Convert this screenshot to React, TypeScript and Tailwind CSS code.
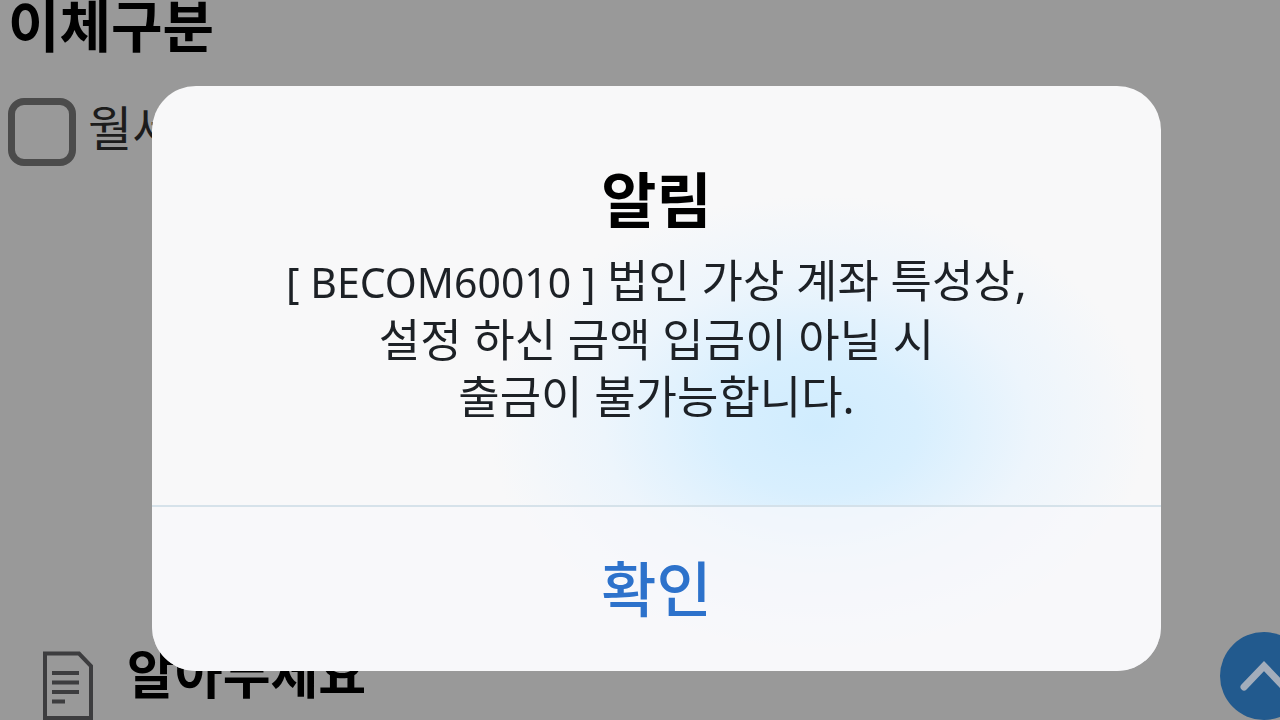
import React from "react";

const DocumentIcon: React.FC = () => {
  return (
    <svg width="52" height="70" viewBox="0 0 52 70" fill="none" stroke="#3d3d3f" aria-hidden="true">
      <path d="M4 3.5H38L50 16V68H4Z" strokeWidth="4" />
      <path d="M11 23H38M11 32.5H38M11 42H38M11 51.5H24" strokeWidth="4" />
    </svg>
  );
};

const AlertDialog: React.FC = () => {
  return (
    <div className="fixed inset-0 flex items-center pt-9 pr-[119px] pl-[152px]">
      <div
        role="alertdialog"
        aria-modal="true"
        aria-labelledby="alert-title"
        aria-describedby="alert-message"
        className="flex w-full flex-col overflow-hidden rounded-[44px] bg-[#f8f8f9] bg-[radial-gradient(ellipse_330px_230px_at_66%_58%,#d0ecfe_0%,#d8effe_30%,#edf5fc_65%,#f8f8f900_100%)] text-center"
      >
        <div className="px-8 pt-[72px] pb-20">
          <h2 id="alert-title" className="text-[60px] leading-[84px] font-bold text-black">
            알림
          </h2>
          <p id="alert-message" className="pt-2.5 text-[45px] leading-[57px] text-[#1d2126]">
            <span className="text-[41px]">[ BECOM60010 ]</span> 법인 가상 계좌 특성상,
            <br />
            설정 하신 금액 입금이 아닐 시
            <br />
            출금이 불가능합니다.
          </p>
        </div>
        <button
          type="button"
          className="border-t-2 border-[#c8d8e2]/70 bg-[#f8f8fb]/70 py-10 text-[60px] leading-[84px] font-medium text-[#2d72cb]"
        >
          확인
        </button>
      </div>
    </div>
  );
};

const App: React.FC = () => {
  return (
    <div className="flex h-screen flex-col justify-between overflow-hidden bg-[#999999] font-['Noto_Sans','Noto_Sans_CJK_KR',sans-serif]">
      {/* Transfer type */}
      <section className="px-2">
        <h1 className="text-[56px] leading-[50px] font-bold text-black">이체구분</h1>
        <label className="mt-12 flex items-start gap-3 text-[48px] leading-[60px] text-[#1c1c1c]">
          <input
            type="checkbox"
            className="size-[68px] appearance-none rounded-2xl border-[7px] border-[#4b4b4b]"
          />
          월세
        </label>
      </section>

      {/* Notice heading and scroll button */}
      <footer className="flex items-end justify-between pl-[41px]">
        <div className="flex items-end gap-[34px]">
          <DocumentIcon />
          <h2 className="text-[52px] leading-[92px] font-bold text-black">알아두세요</h2>
        </div>
        <button
          type="button"
          aria-label="맨 위로"
          className="-mr-7 flex size-[88px] shrink-0 items-center justify-center rounded-full bg-[#225a8e]"
        >
          <svg width="50" height="32" viewBox="0 0 50 32" fill="none" stroke="#a3adbb" strokeWidth="7" strokeLinecap="round" aria-hidden="true">
            <path d="M5 27L25 6L45 27" />
          </svg>
        </button>
      </footer>

      <AlertDialog />
    </div>
  );
};

export default App;
